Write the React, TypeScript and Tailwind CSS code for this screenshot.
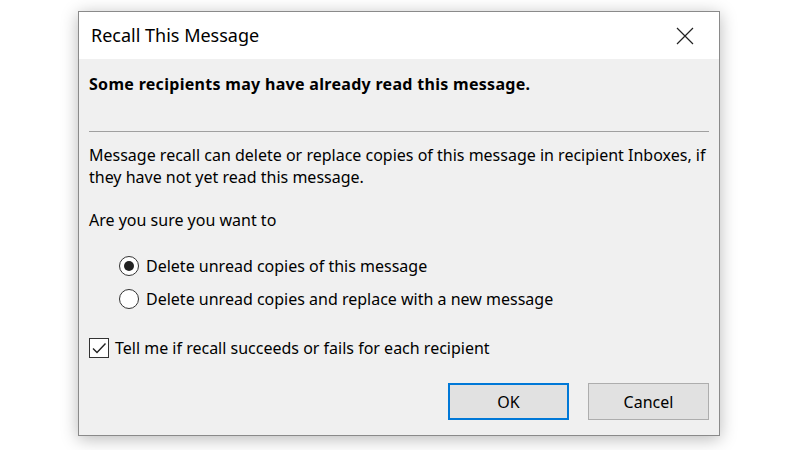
const font = { fontFamily: '"Noto Sans", "Open Sans", sans-serif' };

function Radio({ checked, label }: { checked?: boolean; label: string }) {
  return (
    <label className="flex items-center h-[22px] pl-[30px]">
      <span className="w-[20px] h-[20px] rounded-full border border-[#333] bg-white flex items-center justify-center shrink-0">
        {checked && <span className="w-[10px] h-[10px] rounded-full bg-[#222]" />}
      </span>
      <span className="ml-[7px]">{label}</span>
    </label>
  );
}

export default function App() {
  return (
    <div
      className="w-[800px] h-[450px] bg-white pt-[11px] pl-[78px] text-black"
      style={font}
    >
      <div className="w-[642px] h-[425px] border border-[#8a8a8a] bg-[#f0f0f0] shadow-[0_3px_16px_rgba(0,0,0,0.28)] flex flex-col">
        <div className="h-[47px] bg-white flex items-center justify-between pl-[12px] pr-[18px]">
          <span className="text-[18px]">Recall This Message</span>
          <svg width="18" height="18" viewBox="0 0 18 18" className="mr-[7px]">
            <path d="M1 1 L17 17 M17 1 L1 17" stroke="#222" strokeWidth="1.2" />
          </svg>
        </div>
        <div className="px-[10px] text-[16px] leading-[22px]">
          <p className="mt-[14px] font-bold tracking-[0.3px]">Some recipients may have already read this message.</p>
          <div className="mt-[36px] h-px bg-[#a0a0a0]" />
          <p className="mt-[12px]">
            Message recall can delete or replace copies of this message in recipient Inboxes, if
            <br />
            they have not yet read this message.
          </p>
          <p className="mt-[21px]">Are you sure you want to</p>
          <div className="mt-[24px] flex flex-col gap-[11px]">
            <Radio checked label="Delete unread copies of this message" />
            <Radio label="Delete unread copies and replace with a new message" />
          </div>
          <label className="mt-[27px] flex items-center h-[22px]">
            <span className="w-[20px] h-[20px] border border-[#333] bg-white flex items-center justify-center shrink-0">
              <svg width="16" height="16" viewBox="0 0 16 16">
                <path d="M2 8.5 L6 12.5 L14.5 3.5" fill="none" stroke="#222" strokeWidth="1.4" />
              </svg>
            </span>
            <span className="ml-[6px]">Tell me if recall succeeds or fails for each recipient</span>
          </label>
          <div className="mt-[24px] flex justify-end gap-[19px]">
            <button className="w-[121px] h-[37px] bg-[#e1e1e1] border-2 border-[#0078d7]">OK</button>
            <button className="w-[121px] h-[37px] bg-[#e1e1e1] border border-[#adadad]">Cancel</button>
          </div>
        </div>
      </div>
    </div>
  );
}
